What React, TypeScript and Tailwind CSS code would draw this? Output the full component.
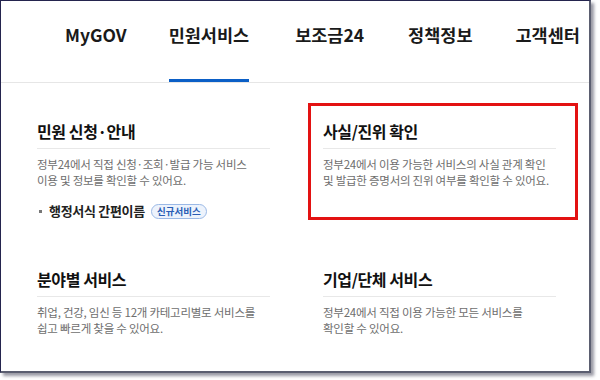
import React from "react";

const font = { fontFamily: '"Noto Sans CJK KR", "Noto Sans", sans-serif' };

function Section({
  title,
  lines,
  children,
}: {
  title: string;
  lines: string[];
  children?: React.ReactNode;
}) {
  return (
    <div className="flex flex-col">
      <h3 className="text-[16px] leading-[22px] font-bold text-[#111] tracking-[-0.4px]">{title}</h3>
      <div className="mt-[6px] border-t border-[#e8e8e8]" />
      <p className="mt-[7px] text-[11.5px] leading-[16px] text-[#6e6e6e] tracking-[-0.25px] whitespace-nowrap">
        {lines.map((l, i) => (
          <React.Fragment key={i}>
            {l}
            {i < lines.length - 1 && <br />}
          </React.Fragment>
        ))}
      </p>
      {children}
    </div>
  );
}

export default function App() {
  const nav = [
    { n: "MyGOV", c: "" },
    { n: "민원서비스", c: "ml-[42px] border-b-[3px] border-[#0b5fc6]" },
    { n: "보조금24", c: "ml-[46px]" },
    { n: "정책정보", c: "ml-[44px]" },
    { n: "고객센터", c: "ml-[43px]" },
  ];
  return (
    <div className="w-[600px] h-[380px] bg-white" style={font}>
      <div className="w-[591px] h-[373px] bg-white border-l border-t border-[#24244e] border-r-2 border-b-2 border-r-[#5b5e70] border-b-[#5b5e70] shadow-[3px_3px_3px_rgba(70,70,90,0.55)] overflow-hidden flex flex-col">
        <nav className="h-[82px] border-b border-[#e6e6e6] flex items-stretch pl-[64px] shrink-0">
          {nav.map(({ n, c }) => (
            <div
              key={n}
              className={`pt-[22px] text-[17.5px] leading-[24px] font-bold text-[#1a1a1a] whitespace-nowrap ${c}`}
            >
              {n}
            </div>
          ))}
        </nav>
        <div className="grid grid-cols-[233px_233px] gap-x-[53px] gap-y-[48px] pl-[36px] pt-[37px]">
          <Section
            title="민원 신청·안내"
            lines={["정부24에서 직접 신청·조회·발급 가능 서비스", "이용 및 정보를 확인할 수 있어요."]}
          >
            <div className="mt-[14px] h-[18px] flex items-center">
              <span className="w-[3px] h-[3px] bg-[#777] ml-[2px] mr-[7px]" />
              <span className="text-[13px] font-bold text-[#222] tracking-[-0.3px]">행정서식 간편이름</span>
              <span className="ml-[6px] h-[15px] px-[5px] rounded-full border border-[#9bb9e6] bg-[#edf3fc] text-[9.5px] leading-[13px] font-bold text-[#2a5db5] flex items-center">
                신규서비스
              </span>
            </div>
          </Section>
          <div className="relative">
            <Section
              title="사실/진위 확인"
              lines={["정부24에서 이용 가능한 서비스의 사실 관계 확인", "및 발급한 증명서의 진위 여부를 확인할 수 있어요."]}
            />
            <div className="absolute left-[-15px] top-[-17px] w-[270px] h-[117px] border-[3px] border-[#e31212] pointer-events-none" />
          </div>
          <Section
            title="분야별 서비스"
            lines={["취업, 건강, 임신 등 12개 카테고리별로 서비스를", "쉽고 빠르게 찾을 수 있어요."]}
          />
          <Section
            title="기업/단체 서비스"
            lines={["정부24에서 직접 이용 가능한 모든 서비스를", "확인할 수 있어요."]}
          />
        </div>
      </div>
    </div>
  );
}
